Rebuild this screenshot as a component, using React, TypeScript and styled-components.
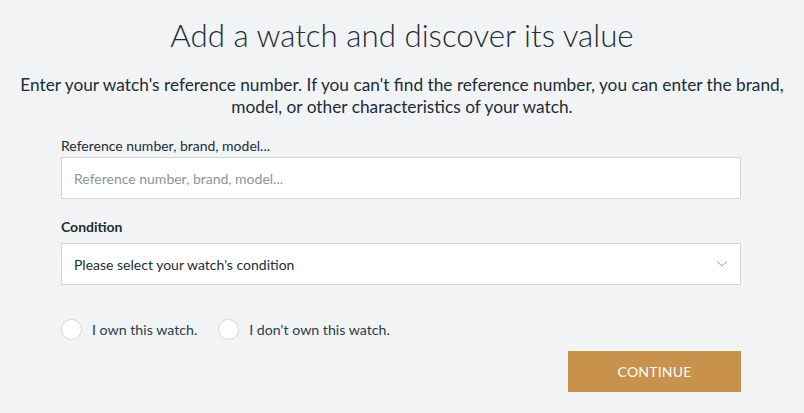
import React from "react";
import styled, { createGlobalStyle } from "styled-components";

const Global = createGlobalStyle`
  html, body { margin: 0; padding: 0; background: #f2f3f5; }
  body { font-family: Lato, "Open Sans", sans-serif; color: #1c2d36; }
  * { box-sizing: border-box; }
`;

const Page = styled.div`
  width: 804px;
  height: 413px;
  display: flex;
  flex-direction: column;
  align-items: center;
  overflow: hidden;
`;

const Title = styled.h1`
  margin: 13px 0 0;
  font-weight: 300;
  font-size: 31.3px;
  line-height: 44px;
  color: #1c2d36;
`;

const Intro = styled.p`
  margin: 17px 0 0;
  font-size: 17.3px;
  line-height: 22px;
  text-align: center;
  width: 790px;
`;

const Form = styled.div`
  width: 680px;
  margin: 18px 2px 0 0;
  display: flex;
  flex-direction: column;
`;

const Label = styled.label<{ $bold?: boolean }>`
  font-size: 14px;
  line-height: 20px;
  font-weight: ${(p) => (p.$bold ? 700 : 400)};
  margin-bottom: ${(p) => (p.$bold ? 6 : 1)}px;
`;

const Input = styled.input`
  height: 42px;
  width: 100%;
  border: 1px solid #d3d7db;
  background: #fff;
  padding: 0 12px;
  font-family: inherit;
  font-size: 14px;
  color: #1c2d36;
  outline: none;
  &::placeholder { color: #8c959b; }
`;

const Field = styled.div`
  display: flex;
  flex-direction: column;
  & + & { margin-top: 18px; }
`;

const Select = styled.div`
  height: 42px;
  border: 1px solid #d3d7db;
  background: #fff;
  padding: 0 12px;
  display: flex;
  align-items: center;
  justify-content: space-between;
  font-size: 14px;
`;

const Radios = styled.div`
  display: flex;
  gap: 21px;
  margin-top: 34px;
`;

const RadioItem = styled.label`
  display: flex;
  align-items: center;
  gap: 10px;
  font-size: 14.2px;
  color: #2a3e48;
`;

const Circle = styled.span`
  width: 21px;
  height: 21px;
  border-radius: 50%;
  border: 1px solid #d3d7db;
  background: #fff;
`;

const Actions = styled.div`
  display: flex;
  justify-content: flex-end;
  margin-top: 11px;
`;

const Button = styled.button`
  width: 173px;
  height: 41px;
  border: none;
  background: #c8914c;
  color: #fff;
  font-family: inherit;
  font-size: 14px;
  letter-spacing: 0.2px;
`;

export default function App() {
  return (
    <Page>
      <Global />
      <Title>Add a watch and discover its value</Title>
      <Intro>
        Enter your watch's reference number. If you can't find the reference number, you can enter the brand,
        model, or other characteristics of your watch.
      </Intro>
      <Form>
        <Field>
          <Label>Reference number, brand, model...</Label>
          <Input placeholder="Reference number, brand, model..." />
        </Field>
        <Field>
          <Label $bold>Condition</Label>
          <Select>
            <span>Please select your watch's condition</span>
            <svg width="12" height="8" viewBox="0 0 12 8">
              <path d="M1 1.5 L6 6 L11 1.5" fill="none" stroke="#9aa3a9" strokeWidth="1" />
            </svg>
          </Select>
        </Field>
        <Radios>
          <RadioItem>
            <Circle />
            I own this watch.
          </RadioItem>
          <RadioItem>
            <Circle />
            I don't own this watch.
          </RadioItem>
        </Radios>
        <Actions>
          <Button>CONTINUE</Button>
        </Actions>
      </Form>
    </Page>
  );
}
